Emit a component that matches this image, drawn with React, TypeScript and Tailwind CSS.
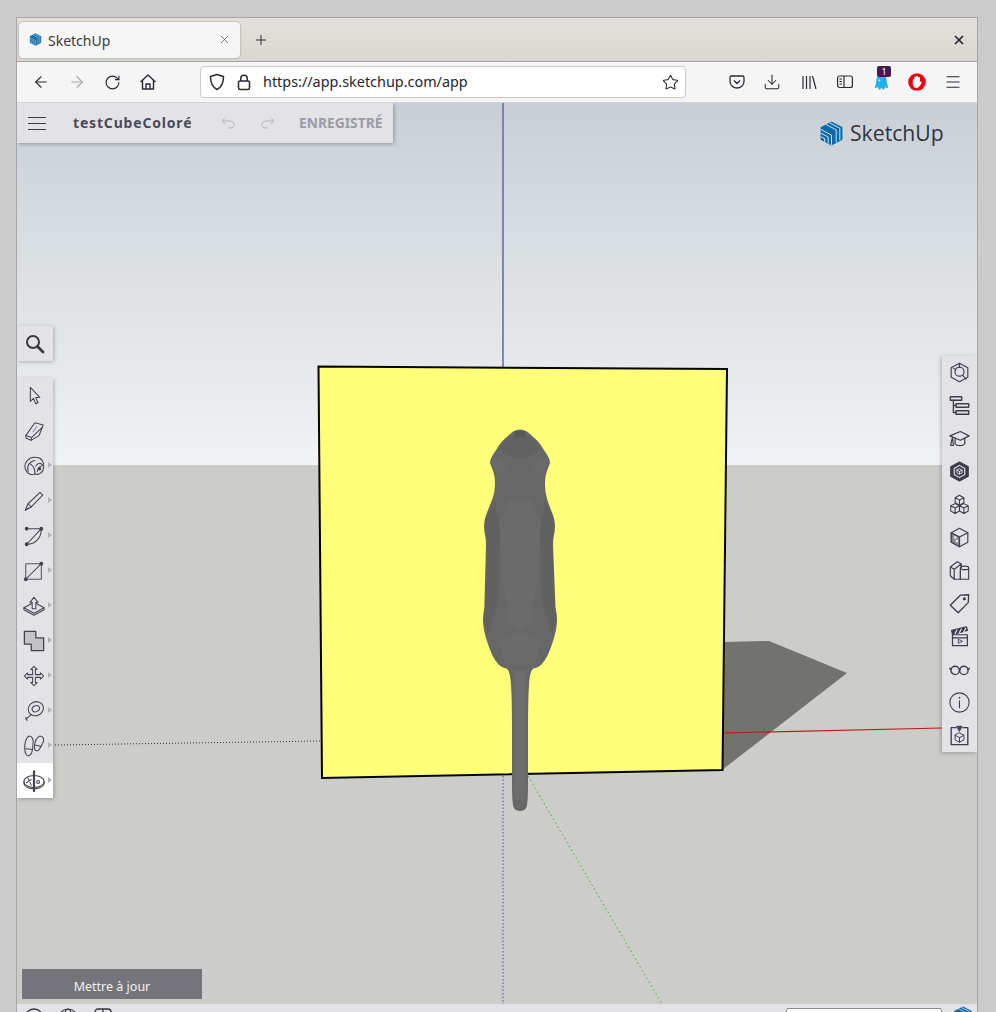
import React from "react";
import { ArrowLeft, ArrowRight, RotateCw, Star, Download, X, Plus, Menu } from "lucide-react";

const INK = "#3d3d4a";

function Logo({ size }: { size: number }) {
  return (
    <svg width={size} height={size} viewBox="0 0 24 24" className="shrink-0">
      <path d="M12 0.5 L22.5 6 V18 L12 23.5 L1.5 18 V6 Z" fill="#0d6aa8" />
      <g fill="none" stroke="#dcecf6" strokeWidth="0.9">
        <path d="M1.5 8 L12 13.5 L12 23" />
        <path d="M1.5 11.5 L8.8 15.3 L8.8 21.5" />
        <path d="M1.5 15 L5.5 17 L5.5 20" />
        <path d="M6.5 3.2 L16.5 8.5 V20.5" />
        <path d="M10 1.6 L20 7 V18.5" />
      </g>
    </svg>
  );
}

function S({ children, size = 22, sw = 1.3, color = INK }: { children: React.ReactNode; size?: number; sw?: number; color?: string }) {
  return (
    <svg width={size} height={size} viewBox="0 0 24 24" fill="none" stroke={color} strokeWidth={sw} strokeLinejoin="round" strokeLinecap="round" className="shrink-0">
      {children}
    </svg>
  );
}

function smooth(pts: number[][]): string {
  const n = pts.length;
  const mid = (a: number[], b: number[]) => [(a[0] + b[0]) / 2, (a[1] + b[1]) / 2];
  const start = mid(pts[n - 1], pts[0]);
  let d = `M${start[0]} ${start[1]}`;
  for (let i = 0; i < n; i++) {
    const m = mid(pts[i], pts[(i + 1) % n]);
    d += ` Q${pts[i][0]} ${pts[i][1]} ${m[0]} ${m[1]}`;
  }
  return d + " Z";
}

const catOutline = [
  [520, 429], [527, 431], [532, 436], [538, 441], [544, 450], [551, 461], [548, 468], [545, 477], [545, 492], [549, 505],
  [555, 520], [555, 532], [552, 542], [552, 575], [553, 603], [557, 612], [557, 628], [551, 648], [545, 661], [538, 668], [530, 669],
  [528, 700], [528, 760], [528, 803], [525, 811], [515, 811], [512, 803], [512, 760], [512, 700], [510, 669], [502, 668], [495, 661],
  [489, 648], [483, 628], [483, 612], [487, 603], [487, 575], [487, 542], [484, 532], [484, 520], [490, 505], [495, 492], [495, 477],
  [492, 468], [489, 461], [496, 450], [502, 441], [508, 436], [513, 431],
];

const toolIcons: React.ReactNode[] = [
  <path key="a" d="M8 2.5 V18 L11.4 14.6 L14 20.5 L16.4 19.4 L13.8 13.8 L18.4 13.4 Z" />,
  <g key="b"><path d="M3 17 L13 3 L22 5.5 L17.5 17 L9 22 L3.5 20 Z" /><path d="M3 17 L9.5 19 L9 22 M9.5 19 L20.5 8.5" /><path d="M11 13 L15 7" stroke="#9a9aa4" /></g>,
  <g key="c"><path d="M2.5 15 C0.5 8 7 1.5 14 2.5 C20 2.5 23.5 8 22.5 13 C22.5 19 17 22.5 13 20.5 C11 22.5 5 22 2.5 15 Z" /><path d="M5.5 18 C4 11 7 7 13 6 M7.5 9.5 C11 12.5 13 13 13 20.5 M14 12 C17 7 20 9 22 11.5 C18 12 16 15 15.5 18" /><circle cx="18" cy="15" r="1.3" fill={INK} /></g>,
  <g key="d"><path d="M2.5 22 L5.5 15 L18.5 2.5 L21.5 5.5 L9 18.5 Z" /><path d="M5.5 15 L9 18.5 M2.5 22 L6 19.5" /></g>,
  <g key="e"><path d="M4 4 H20 M4 21 C14 21 20 14 20 4 M4 21 L20 4" /><circle cx="4" cy="4" r="1.5" fill={INK} /><circle cx="20" cy="4" r="1.5" fill={INK} /><circle cx="4" cy="21" r="1.5" fill={INK} /></g>,
  <g key="f"><rect x="3" y="4" width="17" height="17" stroke="#55555f" /><path d="M3 21 L20 4" /><circle cx="20" cy="4" r="1.5" fill={INK} /><circle cx="3" cy="21" r="1.5" fill={INK} /></g>,
  <g key="g"><path d="M1 14 L12 8 L23 14 L12 20 Z" /><path d="M1 14 V16 L12 22 L23 16 V14" /><path d="M10 15 V8 H7.5 L12 2.5 L16.5 8 H14 V15 Z" fill="#e2e2e7" /></g>,
  <path key="h" d="M1.5 1.5 H14 V8.5 H22.5 V22.5 H9 V15.5 H1.5 Z" fill="#c3c3c8" strokeWidth="1.4" />,
  <g key="i"><path d="M12 1.5 L15.5 5 H13.5 V10.5 H19 V8.5 L22.5 12 L19 15.5 V13.5 H13.5 V19 H15.5 L12 22.5 L8.5 19 H10.5 V13.5 H5 V15.5 L1.5 12 L5 8.5 V10.5 H10.5 V5 H8.5 Z" strokeDasharray="2 0.7" /></g>,
  <g key="j"><ellipse cx="14" cy="9.5" rx="8.5" ry="7.5" transform="rotate(-25 14 9.5)" /><ellipse cx="14" cy="9.5" rx="4.2" ry="3.2" transform="rotate(-25 14 9.5)" /><path d="M9 16 L3 21 M3 19 L4.5 22.5" /></g>,
  <g key="k"><path d="M6.5 1 C10.5 1 11.5 5 11 9 C10.5 13 10.5 16 10 17.5 C9.5 22 5.5 24 3.5 21.5 C1 17 1 5 6.5 1 Z" /><path d="M3 15 L10.3 15.8" /><path d="M18.5 1 C22.5 1 23.5 5 21.5 9 L18.5 14.5 C16.5 18.5 12.5 18 12.5 14 C12.5 9 13.5 3 18.5 1 Z" /><path d="M13 11 L19.8 12.5" /></g>,
  <g key="l"><ellipse cx="12" cy="12.5" rx="11" ry="6.5" /><path d="M1 12.5 V15 C2 18.5 7 20.5 12 20.5 C17 20.5 22 18.5 23 15 V12.5" /><path d="M12 1.5 V23" strokeWidth="2.4" /><path d="M5.5 9 L9 16.5 M3.5 14 L9 10.5" /><circle cx="16.5" cy="13" r="1.6" /></g>,
];

const hasArrow = [false, false, true, true, true, true, true, true, true, true, true, true];

const rightIcons: React.ReactNode[] = [
  <g key="a"><path d="M12 1.5 L21.5 6.5 V17.5 L12 22.5 L2.5 17.5 V6.5 Z" /><circle cx="12" cy="11" r="5.2" /><path d="M15.5 15 L19.5 19.5 M5 7 L8 9 M12 2 V6" /></g>,
  <g key="b" strokeWidth="1.5"><rect x="1.5" y="2" width="13" height="4" /><rect x="8" y="10" width="14.5" height="4" /><rect x="8" y="18" width="14.5" height="4" /><path d="M5 6 V20 H8 M5 12 H8" /></g>,
  <g key="c" strokeWidth="1.4"><path d="M1 9 L13 4 L23 9 L13 14 Z" /><path d="M7 12 V18 C9 21 16 21 18 18 V12" /><path d="M4 11 C3 14 2 17 2 20 H5 L4 11" /></g>,
  <g key="d"><path d="M12 1 L22 6.5 V17.5 L12 23 L2 17.5 V6.5 Z" fill={INK} /><path d="M12 5 L18 8.5 V15.5 L12 19 L6 15.5 V8.5 Z" stroke="#e2e2e7" /><path d="M12 9 L15 10.5 V13.5 L12 15 L9 13.5 V10.5 Z M12 12 V15 M12 12 L15 10.5 M12 12 L9 10.5" stroke="#e2e2e7" strokeWidth="1" /></g>,
  <g key="e" strokeWidth="1.2"><path d="M12 1.5 L17 4.2 V10 L12 12.7 L7 10 V4.2 Z M7 4.2 L12 7 L17 4.2 M12 7 V12.7" /><path d="M7 11 L12 13.5 V19.5 L7 22.3 L2 19.5 V13.5 Z M2 13.5 L7 16 L12 13.5 M7 16 V22.3" /><path d="M17 11 L22 13.5 V19.5 L17 22.3 L12 19.5 V13.5 Z M12 13.5 L17 16 L22 13.5 M17 16 V22.3" /></g>,
  <g key="f"><path d="M12 1.5 L21.5 6.5 V17.5 L12 22.5 L2.5 17.5 V6.5 Z" /><path d="M2.5 6.5 L12 11.5 L21.5 6.5 M12 11.5 V22.5" /><path d="M2.5 7 L12 11.5 V22.5 L2.5 17.5 Z" fill={INK} opacity="0.55" /><circle cx="7" cy="12" r="1.6" fill="#e2e2e7" stroke="none" /><circle cx="9" cy="16" r="1.6" fill="#e2e2e7" stroke="none" /></g>,
  <g key="g"><path d="M1.5 8 L9.5 2 L14 4.5 V9 M1.5 8 L6 10.5 L14 4.5 M1.5 8 V18 L6 22 V10.5" /><path d="M6 22 H13 V12" /><ellipse cx="17.8" cy="9" rx="4.7" ry="2" /><path d="M13 9 V22 H22.5 V9" /></g>,
  <g key="h" strokeWidth="1.5"><path d="M1.5 14 L13 2.5 L22.5 2 L22 11 L10.5 22.5 Z" /><circle cx="17.5" cy="6.5" r="1" fill={INK} /></g>,
  <g key="i" strokeWidth="1.4"><rect x="4" y="10" width="17" height="12.5" /><path d="M3 5 L20 1 L21 5 L4 9.5 Z" fill={INK} /><path d="M7 8.5 L9 4.5 M12 7.5 L14 3.5 M17 6.5 L19 2.5" stroke="#e2e2e7" /><path d="M4 13.5 H21" /><path d="M11 15.5 L15.5 17.5 L11 19.5 Z" strokeWidth="1" /></g>,
  <g key="j" strokeWidth="1.6"><circle cx="7" cy="13" r="4.8" /><circle cx="17" cy="13" r="4.8" /><path d="M11.8 12 C12 11.4 12.6 11.4 12.6 12 M2.2 12 L0.8 10.5 M21.8 12 L23.2 10.5" /></g>,
  <g key="k" strokeWidth="1.2"><circle cx="12" cy="12" r="11" /><path d="M12 10 V18" /><circle cx="12" cy="6.5" r="0.4" /></g>,
  <g key="l" strokeWidth="1.5"><path d="M8 3 H2.5 V22.5 H21.5 V3 H16" /><path d="M9 1.5 H15 L12 7 Z" fill={INK} strokeWidth="1" /><path d="M12 9 L17 11.7 V17 L12 19.7 L7 17 V11.7 Z M7 11.7 L12 14.5 L17 11.7 M12 14.5 V19.7" strokeWidth="1.1" /></g>,
];

const chromeIcons = "text-[#2b2a33]";

export default function App() {
  return (
    <div className="w-[996px] h-[1012px] overflow-hidden bg-[#cbcbcb] pt-[17px] pl-[16px] pr-[18px]" style={{ fontFamily: '"Noto Sans", sans-serif' }}>
      <div className="h-[995px] flex flex-col border-x border-t border-[#a6a6a6]">
        {/* tab strip */}
        <div className="h-[44px] shrink-0 flex items-center bg-gradient-to-b from-[#e4e0dc] to-[#dad7d3] border-b border-[#a3a2a0] pl-[2px]">
          <div className="w-[221px] h-[36px] bg-[#f6f6f6] rounded-[4px] shadow-[0_0_2px_rgba(0,0,0,0.4)] flex items-center pl-[10px] pr-[9px]">
            <Logo size={13} />
            <span className="ml-[6px] pt-[2px] text-[14px] text-[#3a3a42] flex-1">SketchUp</span>
            <X size={13} strokeWidth={1.2} className="text-[#3a3a42]" />
          </div>
          <Plus size={16} strokeWidth={1.5} className="ml-[13px] text-[#2b2a33]" />
          <div className="flex-1" />
          <X size={14} strokeWidth={3} className="mr-[11px] text-[#2b2a33]" />
        </div>
        {/* nav bar */}
        <div className="h-[41px] shrink-0 flex items-center bg-[#f5f5f5] border-b border-[#d4d4d4]">
          <ArrowLeft size={18} strokeWidth={1.5} className={"ml-[15px] " + chromeIcons} />
          <ArrowRight size={18} strokeWidth={1.5} className="ml-[18px] text-[#a9a9ad]" />
          <RotateCw size={17} strokeWidth={1.6} className={"ml-[18px] " + chromeIcons} />
          <svg width="18" height="18" viewBox="0 0 18 18" fill="none" stroke="#2b2a33" strokeWidth="1.4" strokeLinejoin="round" className="ml-[18px] shrink-0">
            <path d="M1.5 9 L9 2 L16.5 9 M3.5 7.5 V16 H14.5 V7.5 M7 16 V11 H11 V16" />
          </svg>
          <div className="ml-[43px] w-[486px] h-[32px] bg-white rounded-[4px] border border-[#cdc9c5] flex items-center pl-[7px] pr-[6px]">
            <svg width="18" height="18" viewBox="0 0 18 18" fill="none" stroke="#2b2a33" strokeWidth="1.5" strokeLinejoin="round" className="shrink-0">
              <path d="M9 1.5 L15.5 3.5 C15.5 10 14 14 9 16.5 C4 14 2.5 10 2.5 3.5 Z" />
            </svg>
            <svg width="16" height="18" viewBox="0 0 16 18" fill="none" stroke="#2b2a33" strokeWidth="1.5" strokeLinejoin="round" className="ml-[10px] shrink-0">
              <rect x="2.5" y="8" width="11" height="8.5" rx="1.5" />
              <path d="M4.8 8 V5 C4.8 1.2 11.2 1.2 11.2 5 V8" />
            </svg>
            <span className="ml-[11px] text-[14.4px] text-[#26252d] flex-1">https://app.sketchup.com/app</span>
            <Star size={17} strokeWidth={1.5} className={chromeIcons} />
          </div>
          <svg width="16" height="16" viewBox="0 0 16 16" fill="none" stroke="#2b2a33" strokeWidth="1.3" strokeLinejoin="round" className="ml-[43px] shrink-0">
            <path d="M2.5 2 H13.5 C14.4 2 15 2.6 15 3.5 V7.5 C15 11.5 11.5 14 8 14 C4.5 14 1 11.5 1 7.5 V3.5 C1 2.6 1.6 2 2.5 2 Z M5 6.5 L8 9.5 L11 6.5" />
          </svg>
          <Download size={18} strokeWidth={1.4} className={"ml-[18px] " + chromeIcons} />
          <svg width="16" height="16" viewBox="0 0 16 16" fill="none" stroke="#2b2a33" strokeWidth="1.2" className="ml-[20px] shrink-0">
            <path d="M2 2 V15 M5.5 2 V15 M9 2 V15 M11.5 2 L15 15" />
          </svg>
          <svg width="16" height="14" viewBox="0 0 16 14" fill="none" stroke="#2b2a33" strokeWidth="1.2" className="ml-[20px] shrink-0">
            <rect x="0.6" y="1" width="14.8" height="11.5" rx="2" />
            <path d="M7 1 V12.5 M2.5 4 H5 M2.5 6.5 H5 M2.5 9 H5" />
          </svg>
          <div className="relative ml-[20px] w-[16px] h-[18px] shrink-0">
            <svg width="15" height="17" viewBox="0 0 14 16" className="absolute left-[1px] top-[1px]">
              <path d="M7 1 C11 1 12 4 12 8 L13.5 13.5 L10.5 12.5 L9 15 L7 13 L5 15 L3.5 12.5 L0.5 13.5 L2 8 C2 4 3 1 7 1 Z" fill="#1fb1f0" />
              <circle cx="5" cy="6" r="0.9" fill="#fff" />
            </svg>
            <span className="absolute left-[4px] top-[-7px] w-[14px] h-[11px] rounded-[2px] bg-[#3f1c50] text-white text-[9px] leading-[11px] text-center">1</span>
          </div>
          <svg width="18" height="18" viewBox="0 0 18 18" className="ml-[19px] shrink-0">
            <circle cx="9" cy="9" r="8.8" fill="#e8040f" />
            <path d="M4.8 7 C4.8 5.5 6.3 5.5 6.3 7 V4.5 C6.3 3.1 8 3.1 8 4.5 V3.8 C8 2.6 10 2.6 10 3.8 V4.8 C10 3.6 12 3.6 12 4.8 V9 C12.8 8 14 8.6 13.5 9.8 C12.5 12.5 11 15 8.5 15 C6 15 4.8 13 4.8 10.5 Z" fill="#fff" />
          </svg>
          <Menu size={18} strokeWidth={1.5} className={"ml-[18px] " + chromeIcons} />
        </div>
        {/* app */}
        <div className="relative flex-1 flex flex-col overflow-hidden">
          <div className="h-[362px] shrink-0 bg-gradient-to-b from-[#c9d0d5] to-[#f1f3f5]" />
          <div className="flex-1 bg-[#cccdc8]" />
          <div className="h-[8px] shrink-0 bg-[#e2e2e7]" />

          {/* 3D scene */}
          <svg className="absolute left-0 top-0" width="960" height="901" viewBox="17 103 960 901">
            <line x1="503" y1="103" x2="503" y2="368" stroke="#6767c9" strokeWidth="1.6" />
            <line x1="503" y1="776" x2="503" y2="1004" stroke="#4a4ad8" strokeWidth="1" strokeDasharray="1.5 2" />
            <line x1="528" y1="776" x2="662" y2="1004" stroke="#3da53d" strokeWidth="1" strokeDasharray="1.5 3" />
            <line x1="55" y1="745" x2="322" y2="741" stroke="#333" strokeWidth="1" strokeDasharray="1 2" />
            <polygon points="724,642 769,641 847,673 722,770" fill="#72726f" />
            <line x1="722" y1="733" x2="942" y2="728" stroke="#b81c1c" strokeWidth="1.1" />
            <polygon points="318.5,366.5 727,369 722.5,770 322,778" fill="#ffff7a" stroke="#050505" strokeWidth="2" strokeLinejoin="miter" />
            <path d={smooth(catOutline)} fill="#676767" />
            <polygon points="486,545 485,520 495,500 500,530 498,600 488,635 484,620" fill="#616161" />
            <polygon points="553,545 554,520 545,500 540,530 542,600 552,635 556,620" fill="#616161" />
            <polygon points="500,520 510,500 530,500 540,520 538,575 532,620 520,635 508,620 502,575" fill="#6b6b6b" />
            <polygon points="498,640 520,632 542,640 534,664 506,664" fill="#6b6b6b" />
            <polygon points="514,670 526,670 526,800 514,800" fill="#6d6d6d" />
            <polygon points="508,437 532,437 541,449 528,458 512,458 499,449" fill="#626262" />
            <polygon points="515,431 525,431 526,438 514,438" fill="#585858" />
            <polygon points="492,462 500,456 507,468 498,474" fill="#6b6b6b" />
            <polygon points="548,462 540,456 533,468 542,474" fill="#6b6b6b" />
          </svg>

          {/* file bar */}
          <div className="absolute left-0 top-0 w-[376px] h-[40px] bg-[#e2e2e7] shadow-[1px_1px_4px_rgba(0,0,0,0.3)] flex items-center pl-[11px]">
            <div className="w-[18px] flex flex-col gap-[5px]">
              <div className="h-px bg-[#3d3d4a]" />
              <div className="h-px bg-[#3d3d4a]" />
              <div className="h-px bg-[#3d3d4a]" />
            </div>
            <span className="ml-[27px] w-[119px] text-[14px] font-bold text-[#4a4a58] tracking-[0.82px] whitespace-nowrap mt-[-2px]">testCubeColoré</span>
            <svg width="14" height="12" viewBox="0 0 14 12" fill="none" stroke="#b5b5bb" strokeWidth="1" className="ml-[29px] shrink-0">
              <path d="M4 1 L1 4 L4 7 M1 4 H9 C12 4 13 6 13 8 C13 10 12 11 9 11 H7" />
            </svg>
            <svg width="14" height="12" viewBox="0 0 14 12" fill="none" stroke="#b5b5bb" strokeWidth="1" className="ml-[26px] shrink-0">
              <path d="M10 1 L13 4 L10 7 M13 4 H5 C2 4 1 6 1 8 C1 10 2 11 5 11 H7" />
            </svg>
            <span className="ml-[24px] text-[13.8px] font-bold text-[#9b9ba3] whitespace-nowrap">ENREGISTRÉ</span>
          </div>

          {/* brand */}
          <div className="absolute left-[802px] top-[16px] flex items-center gap-[6px]">
            <Logo size={25} />
            <span className="text-[21.2px] leading-[28px] font-medium text-[#33333f]" style={{ fontFamily: '"Open Sans", sans-serif' }}>SketchUp</span>
          </div>

          {/* search */}
          <div className="absolute left-0 top-[223px] w-[36px] h-[35px] bg-[#e2e2e7] shadow-[1px_1px_4px_rgba(0,0,0,0.25)] flex items-center justify-center">
            <svg width="20" height="20" viewBox="0 0 20 20" fill="none" stroke="#3a3a3a" className="shrink-0">
              <circle cx="8" cy="8" r="6" strokeWidth="2" />
              <path d="M12.5 12.5 L18 18" strokeWidth="2.8" strokeLinecap="round" />
            </svg>
          </div>

          {/* tools */}
          <div className="absolute left-0 top-[275px] w-[36px] bg-[#e2e2e7] shadow-[1px_1px_4px_rgba(0,0,0,0.25)] flex flex-col">
            {toolIcons.map((ic, i) => (
              <div key={i} className={"relative h-[35px] flex items-center pl-[6px] " + (i === 11 ? "bg-white" : "")}>
                <S size={22} sw={1.15} color="#44444e">{ic}</S>
                {hasArrow[i] && (
                  <span className="absolute left-[31px] top-[14px] w-0 h-0 border-y-[3px] border-y-transparent border-l-[4px] border-l-[#b0b0b8]" />
                )}
              </div>
            ))}
          </div>

          {/* right panel */}
          <div className="absolute right-0 top-[253px] w-[35px] h-[396px] bg-[#e2e2e7] shadow-[-1px_1px_4px_rgba(0,0,0,0.25)] flex flex-col items-center">
            {rightIcons.map((ic, i) => (
              <div key={i} className="h-[33px] shrink-0 flex items-center justify-center">
                <S size={21} sw={1.3}>{ic}</S>
              </div>
            ))}
          </div>

          {/* update */}
          <div className="absolute left-[5px] top-[866px] w-[180px] h-[30px] bg-[#74747a] flex items-center justify-center pt-[6px] text-[12.5px] text-[#f0f0f0]">
            Mettre à jour
          </div>

          {/* status bar */}
          <div className="absolute left-0 bottom-0 w-full h-[8px] overflow-hidden">
            <svg width="20" height="20" viewBox="0 0 20 20" fill="none" stroke="#33333f" strokeWidth="1.4" className="absolute left-[7px] top-[4px]">
              <circle cx="10" cy="10" r="9" />
            </svg>
            <svg width="20" height="20" viewBox="0 0 20 20" fill="none" stroke="#33333f" strokeWidth="1.2" className="absolute left-[41px] top-[4px]">
              <circle cx="10" cy="10" r="9" />
              <ellipse cx="10" cy="10" rx="4" ry="9" />
            </svg>
            <svg width="18" height="18" viewBox="0 0 18 18" fill="none" stroke="#33333f" strokeWidth="1.3" className="absolute left-[77px] top-[4px]">
              <rect x="1" y="1" width="16" height="16" rx="3" />
              <path d="M9 1 V6 M1 6 H17" />
            </svg>
            <div className="absolute left-[769px] top-[4px] w-[156px] h-[20px] bg-white rounded-[2px] border border-[#8a8a94]" />
            <div className="absolute left-[936px] top-[2px]">
              <Logo size={20} />
            </div>
          </div>
        </div>
      </div>
    </div>
  );
}
